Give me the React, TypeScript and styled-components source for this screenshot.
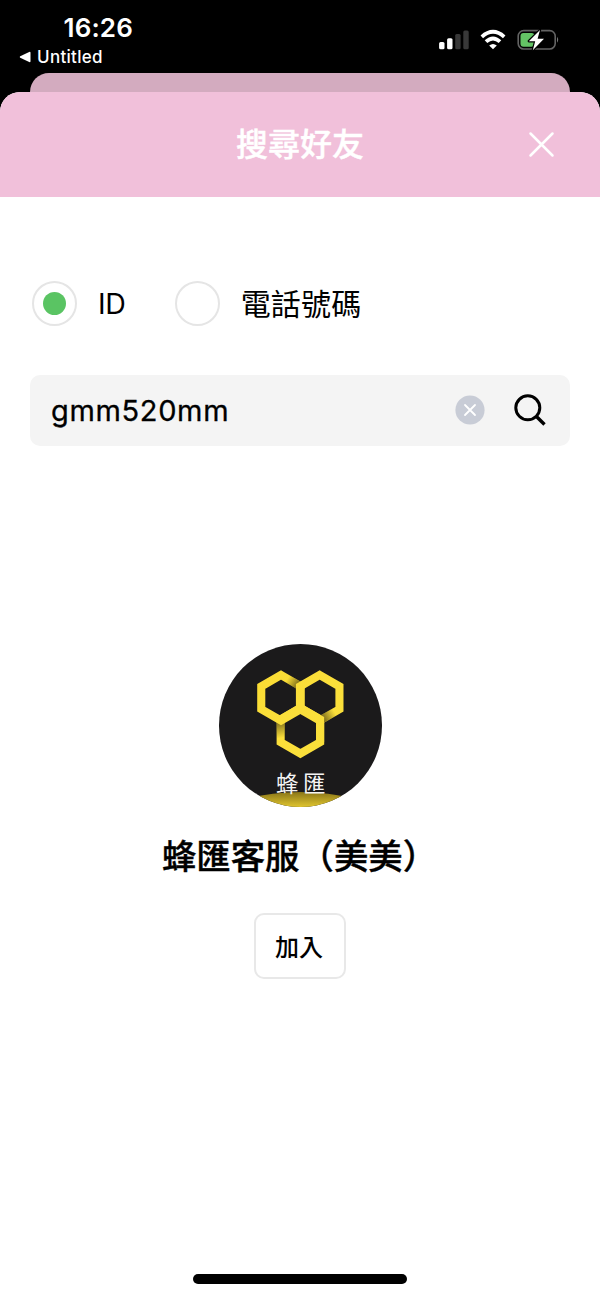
import React from 'react';
import styled, { createGlobalStyle, css } from 'styled-components';

const latin = '"Inter", "Noto Sans CJK TC", sans-serif';
const cjk = '"Noto Sans CJK TC", "Inter", sans-serif';

const GlobalStyle = createGlobalStyle`
  * { box-sizing: border-box; }
  body { margin: 0; background: #000; }
  button { border: 0; padding: 0; background: none; color: inherit; font: inherit; }
`;

const Screen = styled.div`
  display: flex;
  flex-direction: column;
  width: 600px;
  height: 1299px;
  overflow: hidden;
  background: #000;
  color: #000;
  font-family: ${latin};
`;

const StatusBar = styled.header`
  display: flex;
  justify-content: space-between;
  flex: none;
  height: 73px;
  padding: 12px 39px 0 19px;
  color: #fff;
`;

const StatusLeft = styled.div`
  display: flex;
  flex-direction: column;
`;

const Clock = styled.time`
  margin-left: 44.5px;
  font-size: 26px;
  line-height: 32px;
  font-weight: 600;
  letter-spacing: 0.15px;
`;

const BackLink = styled.a`
  display: flex;
  align-items: center;
  gap: 6px;
  margin-top: 2px;
  font-size: 17px;
  line-height: 22px;
  font-weight: 500;
  letter-spacing: 0.3px;
`;

const StatusIcons = styled.div`
  display: flex;
  align-items: flex-start;
  padding-top: 16px;
`;

const SheetBehind = styled.div`
  flex: none;
  height: 19px;
  margin: 0 30px;
  border-radius: 19px 19px 0 0;
  background: #d3abbf;
`;

const Sheet = styled.main`
  display: flex;
  flex-direction: column;
  flex: 1;
  border-radius: 20px 20px 0 0;
  overflow: hidden;
  background: #fff;
`;

const SheetHeader = styled.div`
  display: grid;
  grid-template-columns: 1fr auto 1fr;
  align-items: center;
  flex: none;
  height: 105px;
  padding: 0 45px 1px;
  background: #f1c0da;
  color: #fff;
`;

const Title = styled.h1`
  grid-column: 2;
  margin: 0;
  padding-bottom: 4px;
  font: 500 32px/48px ${cjk};
  -webkit-text-stroke: 0.4px currentColor;
`;

const CloseButton = styled.button`
  display: flex;
  justify-self: end;
`;

const Modes = styled.div`
  display: flex;
  align-items: center;
  flex: none;
  gap: 49px;
  height: 45px;
  margin: 84px 32px 0;
`;

const Mode = styled.label`
  display: flex;
  align-items: center;
  gap: 21px;
`;

const Radio = styled.span<{ $checked?: boolean }>`
  display: grid;
  place-items: center;
  width: 45px;
  height: 45px;
  border: 2px solid #e5e5e5;
  border-radius: 50%;
  ${({ $checked }) =>
    $checked &&
    css`
      &::after {
        content: '';
        width: 23px;
        height: 23px;
        border-radius: 50%;
        background: #5ac463;
      }
    `}
`;

const ModeLabel = styled.span<{ $cjk?: boolean }>`
  padding: ${({ $cjk }) => ($cjk ? '0 0 3px' : '1px 0 0')};
  font-family: ${({ $cjk }) => ($cjk ? cjk : latin)};
  font-size: ${({ $cjk }) => ($cjk ? '30px' : '28.5px')};
  letter-spacing: ${({ $cjk }) => ($cjk ? '0.2px' : '-0.3px')};
  line-height: 44px;
`;

const SearchField = styled.div`
  display: flex;
  align-items: center;
  flex: none;
  height: 71px;
  margin: 49px 30px 0;
  padding: 0 24px 1px 21px;
  border-radius: 10px;
  background: #f4f4f4;
`;

const Query = styled.span`
  flex: 1;
  padding-top: 2px;
  font-size: 29px;
  line-height: 40px;
  letter-spacing: 0.65px;
  -webkit-text-stroke: 0.3px currentColor;
`;

const ClearButton = styled.button`
  display: flex;
  margin-right: 29px;
`;

const SearchButton = styled.button`
  display: flex;
`;

const Profile = styled.section`
  display: flex;
  flex-direction: column;
  align-items: center;
  flex: 1;
  padding-top: 198px;
`;

const Avatar = styled.div`
  display: flex;
  width: 163px;
  height: 163px;
`;

const Name = styled.h2`
  margin: 22px 1px 0 0;
  font: 500 34.4px/50px ${cjk};
  -webkit-text-stroke: 0.4px currentColor;
  white-space: nowrap;
`;

const AddButton = styled.button`
  width: 92px;
  height: 66px;
  margin-top: 34px;
  padding-right: 2px;
  border: 2px solid #e8e8e8;
  border-radius: 10px;
  font: 500 24px/36px ${cjk};
`;

const HomeIndicator = styled.div`
  flex: none;
  align-self: center;
  width: 214px;
  height: 10px;
  margin-bottom: 15px;
  border-radius: 5px;
  background: #000;
`;

const hexagon = (cx: number, cy: number, r: number) =>
  [0, 1, 2, 3, 4, 5]
    .map((i) => {
      const a = (Math.PI / 3) * i - Math.PI / 2;
      return `${cx + r * Math.cos(a)},${cy + r * Math.sin(a)}`;
    })
    .join(' ');

const Honeycomb = () => (
  <svg width="163" height="163" viewBox="0 0 163 163">
    <defs>
      <clipPath id="disc"><circle cx="81.5" cy="81.5" r="81.5" /></clipPath>
      <linearGradient id="gold" gradientUnits="userSpaceOnUse" x1="0" y1="148" x2="0" y2="163">
        <stop offset="0" stopColor="#8a7618" />
        <stop offset="1" stopColor="#e0c52f" />
      </linearGradient>
      <linearGradient id="hex" gradientUnits="userSpaceOnUse" x1="38" y1="27" x2="110" y2="114">
        <stop offset="0" stopColor="#fadc33" />
        <stop offset="0.5" stopColor="#fbdf3b" />
        <stop offset="1" stopColor="#fae03a" />
      </linearGradient>
      <linearGradient id="shadeTop" gradientUnits="userSpaceOnUse" x1="69" y1="34" x2="80" y2="41">
        <stop offset="0" stopColor="#3a300c" stopOpacity="0" />
        <stop offset="1" stopColor="#3a300c" stopOpacity="0.7" />
      </linearGradient>
      <linearGradient id="shadeLeft" gradientUnits="userSpaceOnUse" x1="62" y1="94" x2="59" y2="79">
        <stop offset="0" stopColor="#3a300c" stopOpacity="0" />
        <stop offset="1" stopColor="#3a300c" stopOpacity="0.6" />
      </linearGradient>
      <linearGradient id="shadeRight" gradientUnits="userSpaceOnUse" x1="116" y1="69" x2="104" y2="76">
        <stop offset="0" stopColor="#3a300c" stopOpacity="0" />
        <stop offset="1" stopColor="#3a300c" stopOpacity="0.7" />
      </linearGradient>
    </defs>
    <g clipPath="url(#disc)">
      <rect width="163" height="163" fill="#1b1a1b" />
      <ellipse cx="81.5" cy="170" rx="72" ry="22" fill="url(#gold)" />
      <g fill="none" stroke="url(#hex)" strokeWidth="8.1">
        <polygon points={hexagon(81.4, 86.8, 22.8)} />
        <path d="M61.7 78V97" stroke="url(#shadeLeft)" />
        <polygon points={hexagon(62, 53.8, 22.8)} />
        <path d="M64 32.2 81.7 42.4" stroke="url(#shadeTop)" />
        <polygon points={hexagon(100.7, 53.8, 22.8)} />
        <path d="M118 66.6 100.7 76.6" stroke="url(#shadeRight)" />
        <path d="M62 75.6 81.4 64 101.1 75.4V98.2" />
      </g>
    </g>
    <text x="57" y="148" fill="#f4f4f4" fontSize="22.5" letterSpacing="4.5" fontFamily='"Noto Sans CJK TC", sans-serif'>蜂匯</text>
  </svg>
);

export default function App() {
  return (
    <>
      <GlobalStyle />
      <Screen>
        <StatusBar>
          <StatusLeft>
            <Clock>16:26</Clock>
            <BackLink>
              <svg width="12" height="12" viewBox="0 0 12 12" fill="#fff">
                <path d="M1.2 5.3 10.2 1Q11.5.5 11.5 1.8v8.4q0 1.3-1.3.8L1.2 6.7Q.2 6 1.2 5.3Z" />
              </svg>
              Untitled
            </BackLink>
          </StatusLeft>
          <StatusIcons>
            <svg width="122" height="24" viewBox="0 0 122 24">
              <g fill="#fff">
                <rect x="0.1" y="14" width="5.4" height="7.3" rx="1.5" />
                <rect x="8.1" y="10.3" width="5.4" height="11" rx="1.5" />
                <rect x="16.2" y="6" width="5.4" height="15.3" rx="1.5" opacity=".22" />
                <rect x="24.3" y="2.5" width="5.4" height="18.8" rx="1.5" opacity=".22" />
              </g>
              <g fill="none" stroke="#fff" strokeWidth="3.8">
                <path d="M42.8 8.8Q54 -1.1 65.2 8.8" />
                <path d="M47 13.7Q54 7.2 61 13.7" />
              </g>
              <path d="M54 21.3 50.2 17.6Q54 14.2 57.8 17.6Z" fill="#fff" />
              <rect x="79.2" y="2.6" width="37" height="18.4" rx="5.5" fill="none" stroke="#636363" strokeWidth="1.6" />
              <path d="M118 8.8Q120.4 11.8 118 14.8Z" fill="#777" />
              <rect x="81.5" y="4.9" width="14" height="13.8" rx="3" fill="#64c465" />
              <path d="M101 2 89.8 13.2H96.2L93.8 22.2 105 10.8H98.6Z" fill="#fff" stroke="#000" strokeWidth="2.4" paintOrder="stroke" strokeLinejoin="round" />
            </svg>
          </StatusIcons>
        </StatusBar>
        <SheetBehind />
        <Sheet>
          <SheetHeader>
            <Title>搜尋好友</Title>
            <CloseButton aria-label="關閉">
              <svg width="27" height="27" viewBox="0 0 27 27" fill="none" stroke="#fff" strokeWidth="2.5" strokeLinecap="round">
                <path d="M2.5 2.5 24.5 24.5M24.5 2.5 2.5 24.5" />
              </svg>
            </CloseButton>
          </SheetHeader>
          <Modes>
            <Mode>
              <Radio $checked />
              <ModeLabel>ID</ModeLabel>
            </Mode>
            <Mode>
              <Radio />
              <ModeLabel $cjk>電話號碼</ModeLabel>
            </Mode>
          </Modes>
          <SearchField>
            <Query>gmm520mm</Query>
            <ClearButton aria-label="清除">
              <svg width="30" height="30" viewBox="0 0 30 30">
                <circle cx="15" cy="15" r="14.6" fill="#c8ccd6" />
                <path d="M10 10 20 20M20 10 10 20" stroke="#fff" strokeWidth="1.8" strokeLinecap="round" />
              </svg>
            </ClearButton>
            <SearchButton aria-label="搜尋">
              <svg width="32" height="32" viewBox="0 0 32 32" fill="none" stroke="#000" strokeWidth="3">
                <circle cx="13.8" cy="13.8" r="12" />
                <path d="M22.2 22.2 30.5 30.5" strokeWidth="3.4" />
              </svg>
            </SearchButton>
          </SearchField>
          <Profile>
            <Avatar><Honeycomb /></Avatar>
            <Name>蜂匯客服（美美）</Name>
            <AddButton>加入</AddButton>
          </Profile>
          <HomeIndicator />
        </Sheet>
      </Screen>
    </>
  );
}
